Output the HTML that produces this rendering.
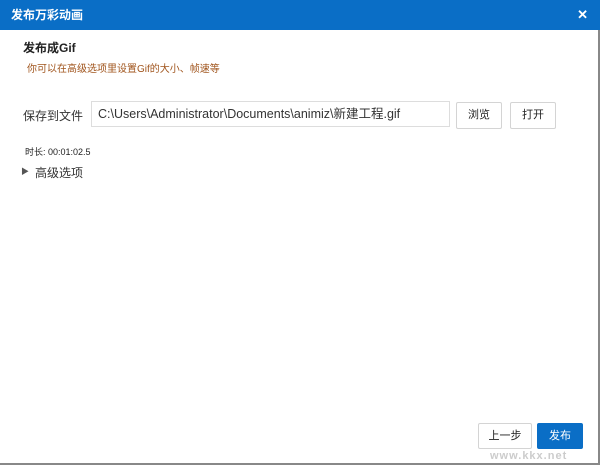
<!DOCTYPE html>
<html><head><meta charset="utf-8"><style>
*{margin:0;padding:0;box-sizing:border-box}
body{width:600px;height:465px;background:#fff;font-family:"Liberation Sans","Noto Sans CJK SC",sans-serif;position:relative;overflow:hidden;color:#222}
.t{position:absolute;left:0;top:0;width:600px;height:30px;background:#0a6ec6;color:#fff;font-size:12px;font-weight:bold;line-height:30px;padding-left:11px}
.x{position:absolute;right:12px;top:0;font-size:13px;font-weight:bold}
.a{position:absolute;white-space:nowrap}
.btn{position:absolute;border:1px solid #d4d4d4;background:#fff;font-size:11px;text-align:center;border-radius:2px}
.rb{position:absolute;right:0;top:30px;width:2px;height:435px;background:#888}
.bb{position:absolute;left:0;bottom:0;width:600px;height:2px;background:#888}
</style></head><body>
<div class="t">发布万彩动画<span class="x">✕</span></div>
<div class="rb"></div><div class="bb"></div>
<div class="a" style="left:23px;top:39px;font-size:12px;font-weight:bold">发布成Gif</div>
<div class="a" style="left:27px;top:60px;font-size:10px;color:#a0541c">你可以在高级选项里设置Gif的大小、帧速等</div>
<div class="a" style="left:23px;top:107px;font-size:12px;color:#333">保存到文件</div>
<div class="a" style="left:91px;top:101px;width:359px;height:26px;border:1px solid #ddd;font-size:12.5px;line-height:24px;padding-left:6px;color:#333">C:\Users\Administrator\Documents\animiz\新建工程.gif</div>
<div class="btn" style="left:456px;top:102px;width:46px;height:27px;line-height:25px">浏览</div>
<div class="btn" style="left:510px;top:102px;width:46px;height:27px;line-height:25px">打开</div>
<div class="a" style="left:25px;top:145px;font-size:9px">时长: 00:01:02.5</div>
<div class="a" style="left:21px;top:166px;font-size:8px;color:#555">▶</div>
<div class="a" style="left:35px;top:164px;font-size:12px;color:#333">高级选项</div>
<div class="btn" style="left:478px;top:423px;width:54px;height:26px;line-height:24px">上一步</div>
<div class="btn" style="left:537px;top:423px;width:46px;height:26px;line-height:24px;background:#0a6ec6;border-color:#0a6ec6;color:#fff">发布</div>
<div class="a" style="left:490px;top:450px;font-size:11px;font-weight:bold;color:#ccc;letter-spacing:1px">www.kkx.net</div>
</body></html>
